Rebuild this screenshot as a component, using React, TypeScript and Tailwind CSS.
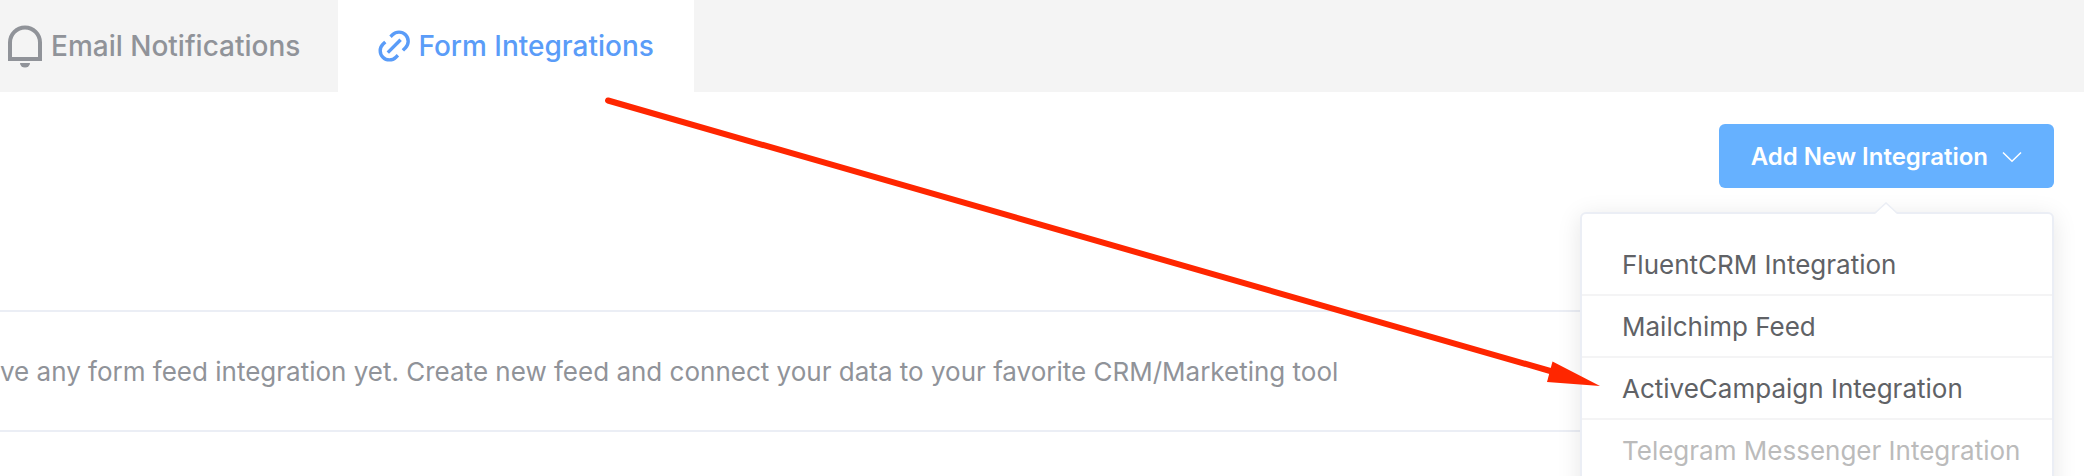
import { useState } from "react";
import clsx from "clsx";

interface Integration {
  id: string;
  title: string;
  disabled?: boolean;
}

const integrations: Integration[] = [
  { id: "fluentcrm", title: "FluentCRM Integration" },
  { id: "mailchimp", title: "Mailchimp Feed" },
  { id: "activecampaign", title: "ActiveCampaign Integration" },
  { id: "telegram", title: "Telegram Messenger Integration", disabled: true },
];

function BellIcon() {
  return (
    <svg className="h-11 w-9 shrink-0" viewBox="0 0 36 44" fill="none" aria-hidden="true">
      <path
        d="M3 35V18.5a15 15 0 0 1 30 0V35Z"
        stroke="currentColor"
        strokeWidth="4"
      />
      <path d="M13 39h10a5 4.6 0 0 1-10 0Z" fill="currentColor" />
    </svg>
  );
}

function LinkIcon() {
  return (
    <svg
      className="size-8 shrink-0"
      viewBox="0 0 32 32"
      fill="none"
      stroke="currentColor"
      strokeWidth="3.4"
      aria-hidden="true"
    >
      <path d="M12.5 6.8l2-2a9.2 9.2 0 0 1 13 0a9.2 9.2 0 0 1 0 13l-2.6 2.6" />
      <path d="M19.9 25.2l-2 2a9.2 9.2 0 0 1-13 0a9.2 9.2 0 0 1 0-13l2.4-2.2" />
      <path d="M9.8 22.6L22.6 9.8" />
    </svg>
  );
}

function ChevronIcon() {
  return (
    <svg
      className="h-3 w-5"
      viewBox="0 0 20 12"
      fill="none"
      stroke="currentColor"
      strokeWidth="1.5"
      aria-hidden="true"
    >
      <path d="M1 1.5L10 10.2L19 1.5" />
    </svg>
  );
}

// Red pointer from the active tab to the ActiveCampaign entry
function Pointer() {
  return (
    <svg
      className="pointer-events-none absolute left-[600px] top-[92px] z-20 h-[300px] w-[1004px]"
      viewBox="600 92 1004 300"
      aria-hidden="true"
    >
      <path d="M608 100.5L1552 371.5" stroke="#ff2600" strokeWidth="6" strokeLinecap="round" />
      <path d="M1552.5 361.5L1600 386L1547 382Z" fill="#ff2600" />
    </svg>
  );
}

function IntegrationMenu() {
  return (
    <div className="absolute right-0 top-full z-10 mt-6 w-[474px] rounded-md border-2 border-[#ebeef5] bg-white py-5 shadow-[0_4px_24px_rgba(0,0,0,0.1)]">
      <ul className="divide-y-2 divide-[#f4f4f5]">
        {integrations.map((item) => (
          <li key={item.id}>
            <button
              type="button"
              disabled={item.disabled}
              className={clsx(
                "flex h-[60px] w-full items-center px-10 pt-px text-left text-[26px] whitespace-nowrap",
                item.disabled ? "text-[#bbbbbb]" : "text-[#606266]"
              )}
            >
              {item.title}
            </button>
          </li>
        ))}
      </ul>
    </div>
  );
}

export default function App() {
  const [open, setOpen] = useState(true);

  return (
    <div className="relative h-screen overflow-hidden bg-white font-['Inter',sans-serif]">
      {/* Tabs */}
      <nav className="flex h-[92px] bg-[#f4f4f4] text-[28px] font-medium">
        <a href="#notifications" className="flex items-center gap-2 pl-[7px] pr-[38px] text-[#909399]">
          <BellIcon />
          Email Notifications
        </a>
        <a href="#integrations" className="flex items-center gap-2 bg-white px-10 text-[#5a9cf8]">
          <LinkIcon />
          Form Integrations
        </a>
      </nav>

      <main className="pr-[30px] pt-8">
        {/* Toolbar */}
        <div className="flex justify-end">
          <div className="relative">
            <button
              type="button"
              aria-expanded={open}
              onClick={() => setOpen(!open)}
              className="flex h-16 items-center gap-3.5 rounded-md bg-[#66b1ff] px-8 pt-0.5 text-2xl font-semibold text-white"
            >
              Add New Integration
              <ChevronIcon />
            </button>
            {open && (
              <>
                <IntegrationMenu />
                <svg
                  className="absolute left-1/2 top-full z-10 mt-[14px] h-3 w-6 -translate-x-1/2"
                  viewBox="0 0 24 12"
                  aria-hidden="true"
                >
                  <path d="M1 12L12 1L23 12Z" fill="white" />
                  <path d="M1 11L12 1L23 11" fill="none" stroke="#ebeef5" strokeWidth="1.5" />
                </svg>
              </>
            )}
          </div>
        </div>

        {/* Empty feed list */}
        <div className="mt-[122px] flex h-[122px] items-center border-y-2 border-[#ebeef5] text-[26px] whitespace-nowrap text-[#909399]">
          <p>
            ve any form feed integration yet. Create new feed and connect your data to your favorite CRM/Marketing tool
          </p>
        </div>
      </main>

      <Pointer />
    </div>
  );
}
